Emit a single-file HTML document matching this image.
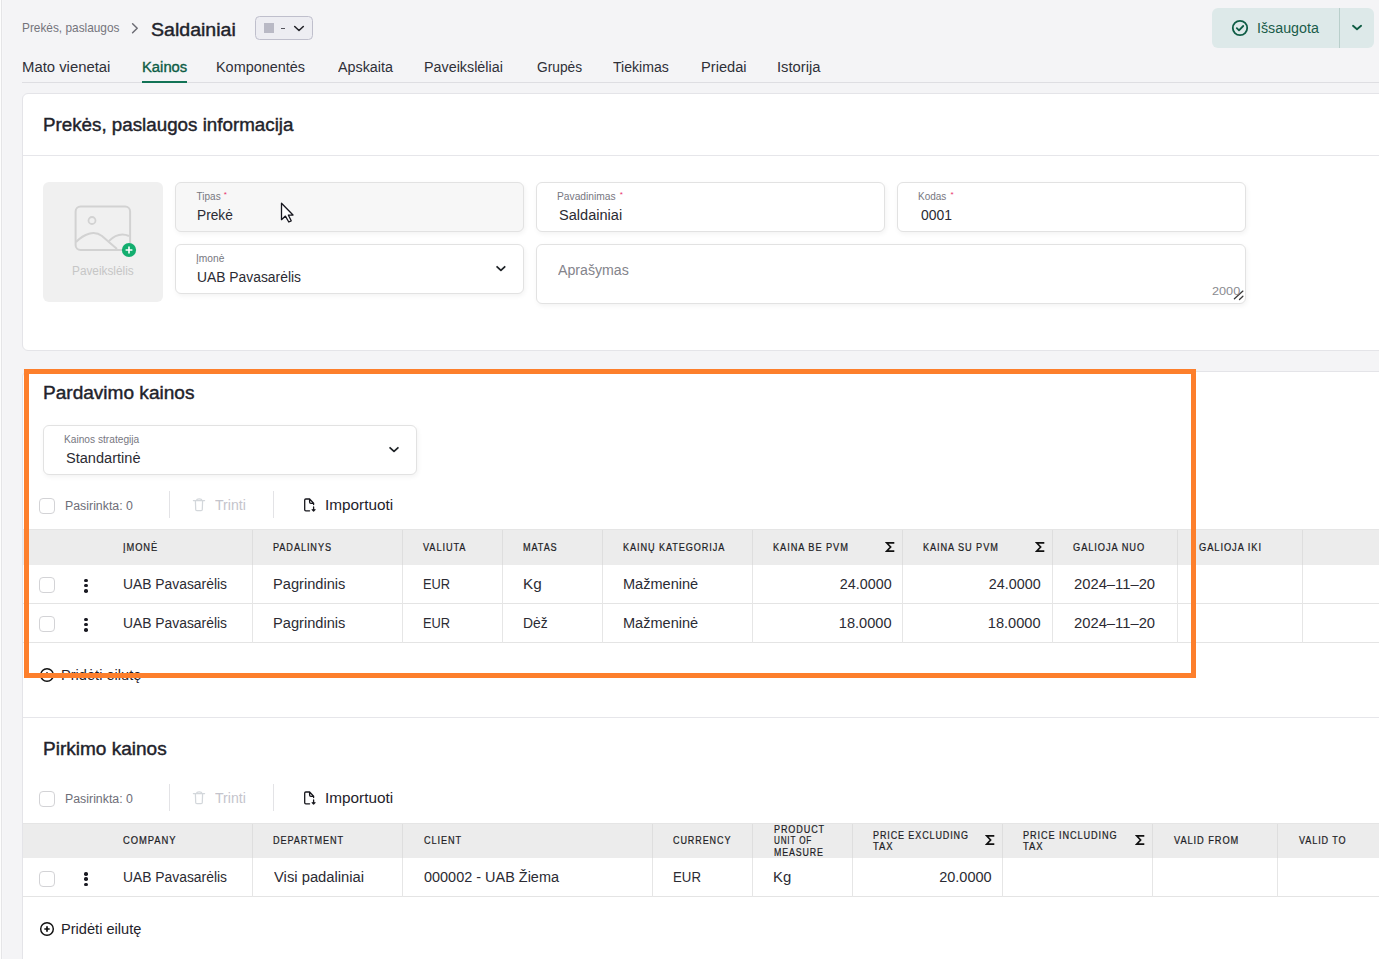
<!DOCTYPE html>
<html><head><meta charset="utf-8"><style>
html,body{margin:0;padding:0;}
body{width:1379px;height:959px;overflow:hidden;position:relative;background:#f4f4f6;font-family:"Liberation Sans",sans-serif;}
</style></head><body>
<!-- left border -->
<div style="position:absolute;left:0;top:0;width:1px;height:959px;background:#fdfdfd"></div><div style="position:absolute;left:1px;top:0;width:1px;height:959px;background:#e5e5e7"></div><div style="position:absolute;left:2px;top:0;width:1px;height:959px;background:#f6f6f8"></div>
<!-- breadcrumb chevron -->
<svg style="position:absolute;left:130px;top:21.5px" width="12" height="14" viewBox="0 0 12 14"><polyline points="2.6,1.8 7.2,6.3 2.6,10.8" fill="none" stroke="#6c6c74" stroke-width="1.5" stroke-linecap="round" stroke-linejoin="round"/></svg>
<!-- status dropdown -->
<div style="position:absolute;left:254.8px;top:16px;width:58px;height:24px;box-sizing:border-box;border:1.2px solid #bfbfcc;border-radius:4.5px;background:#ededf2"></div>
<div style="position:absolute;left:264px;top:23px;width:10px;height:10px;background:#b9b9c5"></div>
<div style="position:absolute;left:280.5px;top:28px;width:4.6px;height:1px;background:#55555e"></div>
<svg style="position:absolute;left:292px;top:23px" width="14" height="10" viewBox="0 0 14 10"><polyline points="2.7,3.5 7,7.5 11.3,3.5" fill="none" stroke="#24242a" stroke-width="1.6" stroke-linecap="round" stroke-linejoin="round"/></svg>
<!-- save button -->
<div style="position:absolute;left:1212px;top:8px;width:162px;height:40px;border-radius:6px;background:#dde9e9"></div>
<div style="position:absolute;left:1339px;top:8px;width:1px;height:40px;background:#b9cfcb"></div>
<svg style="position:absolute;left:1230px;top:18px" width="20" height="20" viewBox="0 0 20 20"><circle cx="10" cy="10" r="7.2" fill="none" stroke="#0f5d45" stroke-width="1.8"/><polyline points="6.8,10.2 9,12.3 13.2,8" fill="none" stroke="#0f5d45" stroke-width="1.8" stroke-linecap="round" stroke-linejoin="round"/></svg>
<svg style="position:absolute;left:1349px;top:21px" width="15" height="12" viewBox="0 0 15 12"><polyline points="4,4.8 8,8.2 12.1,4.8" fill="none" stroke="#0e5c43" stroke-width="1.85" stroke-linecap="round" stroke-linejoin="round"/></svg>
<!-- tabs line + underline -->
<div style="position:absolute;left:22px;top:82px;width:1357px;height:1px;background:#dedee2"></div>
<div style="position:absolute;left:142px;top:81px;width:45px;height:2px;background:#127356"></div>
<!-- card1 -->
<div style="position:absolute;left:22px;top:93px;width:1380px;height:258px;box-sizing:border-box;border:1px solid #e4e4e8;border-radius:6px;background:#fff"></div>
<div style="position:absolute;left:23px;top:155px;width:1356px;height:1px;background:#e6e6ea"></div>
<!-- image placeholder -->
<div style="position:absolute;left:43px;top:182px;width:120px;height:120px;border-radius:6px;background:#f0f0f0"></div>
<svg style="position:absolute;left:70px;top:200px" width="70" height="60" viewBox="0 0 70 60">
 <rect x="5.6" y="6.5" width="54.5" height="43.5" rx="5" fill="none" stroke="#d2d2d2" stroke-width="2"/>
 <circle cx="22" cy="20.5" r="3.5" fill="none" stroke="#d2d2d2" stroke-width="1.8"/>
 <path d="M6,42 C14,34 24,30 32,36 L47,49" fill="none" stroke="#d2d2d2" stroke-width="2"/>
 <path d="M39,41 C45,35 52,33 59,36" fill="none" stroke="#d2d2d2" stroke-width="2"/>
 <circle cx="59" cy="50" r="7.1" fill="#13ae6f"/>
 <path d="M59,46.6 V53.4 M55.6,50 H62.4" stroke="#fff" stroke-width="1.6" stroke-linecap="butt"/>
</svg>
<!-- fields -->
<div style="position:absolute;left:175px;top:182px;width:349px;height:50px;box-sizing:border-box;border:1px solid #e2e2e2;border-radius:6px;background:#f7f7f7;box-shadow:1px 2px 5px rgba(0,0,0,0.05)"></div>
<div style="position:absolute;left:536px;top:182px;width:349px;height:50px;box-sizing:border-box;border:1px solid #e2e2e2;border-radius:6px;background:#fff;box-shadow:1px 2px 5px rgba(0,0,0,0.05)"></div>
<div style="position:absolute;left:897px;top:182px;width:349px;height:50px;box-sizing:border-box;border:1px solid #e2e2e2;border-radius:6px;background:#fff;box-shadow:1px 2px 5px rgba(0,0,0,0.05)"></div>
<div style="position:absolute;left:175px;top:244px;width:349px;height:50px;box-sizing:border-box;border:1px solid #e2e2e2;border-radius:6px;background:#fff;box-shadow:1px 2px 5px rgba(0,0,0,0.05)"></div>
<svg style="position:absolute;left:493px;top:262px" width="14" height="12" viewBox="0 0 14 12"><polyline points="4.1,4.8 7.9,8.4 11.7,4.8" fill="none" stroke="#1e2226" stroke-width="1.75" stroke-linecap="round" stroke-linejoin="round"/></svg>
<div style="position:absolute;left:536px;top:244px;width:710px;height:60px;box-sizing:border-box;border:1px solid #e2e2e2;border-radius:6px;background:#fff;box-shadow:1px 2px 5px rgba(0,0,0,0.05)"></div>
<svg style="position:absolute;left:1232px;top:289px" width="12" height="12" viewBox="0 0 12 12"><path d="M2.4,9.8 L10.9,2.1 M7.5,10.5 L10.9,7.3" stroke="#3a3a3a" stroke-width="1.3" stroke-linecap="round"/></svg>
<!-- cursor -->
<svg style="position:absolute;left:279px;top:201.4px" width="18" height="24" viewBox="0 0 18 24"><path d="M2.5,2.2 L2.5,18.7 L6.4,15.1 L9.8,21 L12.2,19.8 L9.4,14.2 L14,14 Z" fill="#fff" stroke="#16161e" stroke-width="1.3" stroke-linejoin="round"/></svg>
<!-- card2+3 -->
<div style="position:absolute;left:22px;top:371px;width:1380px;height:600px;box-sizing:border-box;border:1px solid #e4e4e8;border-radius:6px;background:#fff"></div>
<!-- dropdown strategy -->
<div style="position:absolute;left:43px;top:425px;width:374px;height:50px;box-sizing:border-box;border:1px solid #e2e2e2;border-radius:6px;background:#fff;box-shadow:1px 2px 5px rgba(0,0,0,0.05)"></div>
<svg style="position:absolute;left:387px;top:443px" width="14" height="12" viewBox="0 0 14 12"><polyline points="3.1,4.8 7,8.3 10.9,4.8" fill="none" stroke="#1e2226" stroke-width="1.75" stroke-linecap="round" stroke-linejoin="round"/></svg>
<div style="position:absolute;left:39px;top:498.3px;width:16px;height:16px;box-sizing:border-box;border:1.3px solid #d3d3d6;border-radius:4px;background:#fff"></div><div style="position:absolute;left:169px;top:491px;width:1px;height:27px;background:#e3e3e6"></div><div style="position:absolute;left:273px;top:491px;width:1px;height:27px;background:#e3e3e6"></div><svg style="position:absolute;left:191px;top:496px" width="16" height="17" viewBox="0 0 16 17"><path d="M2.4,4.6 H13.6 M5.4,4.4 C5.8,2.4 10.6,2.4 11,4.4 M4.4,4.8 L4.7,13.4 C4.7,14.1 5.2,14.6 5.9,14.6 H10.1 C10.8,14.6 11.3,14.1 11.3,13.4 L11.6,4.8" fill="none" stroke="#d3d7db" stroke-width="1.25" stroke-linejoin="round" stroke-linecap="round"/></svg><svg style="position:absolute;left:301px;top:496px" width="18" height="18" viewBox="0 0 18 18"><path d="M8.6,14.8 H4.8 C4.1,14.8 3.7,14.4 3.7,13.7 V4.1 C3.7,3.4 4.1,3 4.8,3 H8.6 L12.6,7.2 V8.6 M8.6,3.2 V6 C8.6,6.8 9.1,7.3 9.9,7.3 H12.4" fill="none" stroke="#16161c" stroke-width="1.3" stroke-linejoin="round" stroke-linecap="round"/><path d="M12.6,10.9 V15 M11.2,13.6 L12.6,15 L14,13.6" fill="none" stroke="#16161c" stroke-width="1.3" stroke-linejoin="round" stroke-linecap="round"/></svg><div style="position:absolute;left:23px;top:529px;width:1356px;height:35.5px;background:#ececec;border-top:1px solid #e5e5e5;box-sizing:border-box"></div><div style="position:absolute;left:23px;top:602.5px;width:1356px;height:1px;background:#e4e4e4"></div><div style="position:absolute;left:39px;top:577.0px;width:16px;height:16px;box-sizing:border-box;border:1.3px solid #d3d3d6;border-radius:4px;background:#fff"></div><div style="position:absolute;left:84.25px;top:578.65px;width:3.5px;height:3.5px;border-radius:50%;background:#1a1a22"></div><div style="position:absolute;left:84.25px;top:583.9px;width:3.5px;height:3.5px;border-radius:50%;background:#1a1a22"></div><div style="position:absolute;left:84.25px;top:589.15px;width:3.5px;height:3.5px;border-radius:50%;background:#1a1a22"></div><div style="position:absolute;left:23px;top:641.5px;width:1356px;height:1px;background:#e4e4e4"></div><div style="position:absolute;left:39px;top:616.0px;width:16px;height:16px;box-sizing:border-box;border:1.3px solid #d3d3d6;border-radius:4px;background:#fff"></div><div style="position:absolute;left:84.25px;top:617.65px;width:3.5px;height:3.5px;border-radius:50%;background:#1a1a22"></div><div style="position:absolute;left:84.25px;top:622.9px;width:3.5px;height:3.5px;border-radius:50%;background:#1a1a22"></div><div style="position:absolute;left:84.25px;top:628.15px;width:3.5px;height:3.5px;border-radius:50%;background:#1a1a22"></div><div style="position:absolute;left:252px;top:530px;width:1px;height:34.5px;background:#dedede"></div><div style="position:absolute;left:252px;top:564.5px;width:1px;height:78px;background:#e6e6e6"></div><div style="position:absolute;left:402px;top:530px;width:1px;height:34.5px;background:#dedede"></div><div style="position:absolute;left:402px;top:564.5px;width:1px;height:78px;background:#e6e6e6"></div><div style="position:absolute;left:502px;top:530px;width:1px;height:34.5px;background:#dedede"></div><div style="position:absolute;left:502px;top:564.5px;width:1px;height:78px;background:#e6e6e6"></div><div style="position:absolute;left:602px;top:530px;width:1px;height:34.5px;background:#dedede"></div><div style="position:absolute;left:602px;top:564.5px;width:1px;height:78px;background:#e6e6e6"></div><div style="position:absolute;left:752px;top:530px;width:1px;height:34.5px;background:#dedede"></div><div style="position:absolute;left:752px;top:564.5px;width:1px;height:78px;background:#e6e6e6"></div><div style="position:absolute;left:902px;top:530px;width:1px;height:34.5px;background:#dedede"></div><div style="position:absolute;left:902px;top:564.5px;width:1px;height:78px;background:#e6e6e6"></div><div style="position:absolute;left:1052px;top:530px;width:1px;height:34.5px;background:#dedede"></div><div style="position:absolute;left:1052px;top:564.5px;width:1px;height:78px;background:#e6e6e6"></div><div style="position:absolute;left:1177px;top:530px;width:1px;height:34.5px;background:#dedede"></div><div style="position:absolute;left:1177px;top:564.5px;width:1px;height:78px;background:#e6e6e6"></div><div style="position:absolute;left:1302px;top:530px;width:1px;height:34.5px;background:#dedede"></div><div style="position:absolute;left:1302px;top:564.5px;width:1px;height:78px;background:#e6e6e6"></div><svg style="position:absolute;left:885px;top:541px" width="11" height="12" viewBox="0 0 11 12"><path d="M9.3,1.8 H1.6 L5.6,6 L1.6,10.2 H9.3" fill="none" stroke="#111" stroke-width="1.7" stroke-linejoin="miter" stroke-linecap="butt"/></svg><svg style="position:absolute;left:1035px;top:541px" width="11" height="12" viewBox="0 0 11 12"><path d="M9.3,1.8 H1.6 L5.6,6 L1.6,10.2 H9.3" fill="none" stroke="#111" stroke-width="1.7" stroke-linejoin="miter" stroke-linecap="butt"/></svg><svg style="position:absolute;left:39px;top:666.8px" width="16" height="16" viewBox="0 0 16 16"><circle cx="8" cy="8" r="6.3" fill="none" stroke="#111" stroke-width="1.45"/><path d="M8,5.3 V10.7 M5.3,8 H10.7" stroke="#111" stroke-width="1.7" stroke-linecap="butt"/></svg><div style="position:absolute;left:23px;top:717px;width:1356px;height:1px;background:#e6e6ea"></div><div style="position:absolute;left:39px;top:791.3px;width:16px;height:16px;box-sizing:border-box;border:1.3px solid #d3d3d6;border-radius:4px;background:#fff"></div><div style="position:absolute;left:169px;top:784px;width:1px;height:27px;background:#e3e3e6"></div><div style="position:absolute;left:273px;top:784px;width:1px;height:27px;background:#e3e3e6"></div><svg style="position:absolute;left:191px;top:789px" width="16" height="17" viewBox="0 0 16 17"><path d="M2.4,4.6 H13.6 M5.4,4.4 C5.8,2.4 10.6,2.4 11,4.4 M4.4,4.8 L4.7,13.4 C4.7,14.1 5.2,14.6 5.9,14.6 H10.1 C10.8,14.6 11.3,14.1 11.3,13.4 L11.6,4.8" fill="none" stroke="#d3d7db" stroke-width="1.25" stroke-linejoin="round" stroke-linecap="round"/></svg><svg style="position:absolute;left:301px;top:789px" width="18" height="18" viewBox="0 0 18 18"><path d="M8.6,14.8 H4.8 C4.1,14.8 3.7,14.4 3.7,13.7 V4.1 C3.7,3.4 4.1,3 4.8,3 H8.6 L12.6,7.2 V8.6 M8.6,3.2 V6 C8.6,6.8 9.1,7.3 9.9,7.3 H12.4" fill="none" stroke="#16161c" stroke-width="1.3" stroke-linejoin="round" stroke-linecap="round"/><path d="M12.6,10.9 V15 M11.2,13.6 L12.6,15 L14,13.6" fill="none" stroke="#16161c" stroke-width="1.3" stroke-linejoin="round" stroke-linecap="round"/></svg><div style="position:absolute;left:23px;top:822.5px;width:1356px;height:35.5px;background:#ececec;border-top:1px solid #e5e5e5;box-sizing:border-box"></div><div style="position:absolute;left:23px;top:896.0px;width:1356px;height:1px;background:#e4e4e4"></div><div style="position:absolute;left:39px;top:870.5px;width:16px;height:16px;box-sizing:border-box;border:1.3px solid #d3d3d6;border-radius:4px;background:#fff"></div><div style="position:absolute;left:84.25px;top:872.15px;width:3.5px;height:3.5px;border-radius:50%;background:#1a1a22"></div><div style="position:absolute;left:84.25px;top:877.4px;width:3.5px;height:3.5px;border-radius:50%;background:#1a1a22"></div><div style="position:absolute;left:84.25px;top:882.65px;width:3.5px;height:3.5px;border-radius:50%;background:#1a1a22"></div><div style="position:absolute;left:252px;top:823.5px;width:1px;height:34.5px;background:#dedede"></div><div style="position:absolute;left:252px;top:858.0px;width:1px;height:39px;background:#e6e6e6"></div><div style="position:absolute;left:402px;top:823.5px;width:1px;height:34.5px;background:#dedede"></div><div style="position:absolute;left:402px;top:858.0px;width:1px;height:39px;background:#e6e6e6"></div><div style="position:absolute;left:652px;top:823.5px;width:1px;height:34.5px;background:#dedede"></div><div style="position:absolute;left:652px;top:858.0px;width:1px;height:39px;background:#e6e6e6"></div><div style="position:absolute;left:752px;top:823.5px;width:1px;height:34.5px;background:#dedede"></div><div style="position:absolute;left:752px;top:858.0px;width:1px;height:39px;background:#e6e6e6"></div><div style="position:absolute;left:852px;top:823.5px;width:1px;height:34.5px;background:#dedede"></div><div style="position:absolute;left:852px;top:858.0px;width:1px;height:39px;background:#e6e6e6"></div><div style="position:absolute;left:1002px;top:823.5px;width:1px;height:34.5px;background:#dedede"></div><div style="position:absolute;left:1002px;top:858.0px;width:1px;height:39px;background:#e6e6e6"></div><div style="position:absolute;left:1152px;top:823.5px;width:1px;height:34.5px;background:#dedede"></div><div style="position:absolute;left:1152px;top:858.0px;width:1px;height:39px;background:#e6e6e6"></div><div style="position:absolute;left:1277px;top:823.5px;width:1px;height:34.5px;background:#dedede"></div><div style="position:absolute;left:1277px;top:858.0px;width:1px;height:39px;background:#e6e6e6"></div><svg style="position:absolute;left:985px;top:834px" width="11" height="12" viewBox="0 0 11 12"><path d="M9.3,1.8 H1.6 L5.6,6 L1.6,10.2 H9.3" fill="none" stroke="#111" stroke-width="1.7" stroke-linejoin="miter" stroke-linecap="butt"/></svg><svg style="position:absolute;left:1135px;top:834px" width="11" height="12" viewBox="0 0 11 12"><path d="M9.3,1.8 H1.6 L5.6,6 L1.6,10.2 H9.3" fill="none" stroke="#111" stroke-width="1.7" stroke-linejoin="miter" stroke-linecap="butt"/></svg><svg style="position:absolute;left:39px;top:920.8px" width="16" height="16" viewBox="0 0 16 16"><circle cx="8" cy="8" r="6.3" fill="none" stroke="#111" stroke-width="1.45"/><path d="M8,5.3 V10.7 M5.3,8 H10.7" stroke="#111" stroke-width="1.7" stroke-linecap="butt"/></svg><span id="t0" style="position:absolute;top:20.90px;font-size:13px;line-height:13px;color:#74747c;font-weight:400;white-space:nowrap;left:22.09px;transform-origin:left center;transform:scaleX(0.9112);">Prekės, paslaugos</span><span id="t1" style="position:absolute;top:20.66px;font-size:18px;line-height:18px;color:#1f232b;font-weight:400;white-space:nowrap;left:150.50px;transform-origin:left center;transform:scaleX(1.0862);-webkit-text-stroke:0.42px #1f232b;">Saldainiai</span><span id="t2" style="position:absolute;top:21.25px;font-size:14px;line-height:14px;color:#1a5c4a;font-weight:400;white-space:nowrap;left:1257.38px;transform-origin:left center;transform:scaleX(1.0180);">Išsaugota</span><span id="t3" style="position:absolute;top:59.65px;font-size:14px;line-height:14px;color:#2f3038;font-weight:400;white-space:nowrap;left:22.14px;transform-origin:left center;transform:scaleX(1.0614);">Mato vienetai</span><span id="t4" style="position:absolute;top:59.65px;font-size:14px;line-height:14px;color:#0d5c45;font-weight:400;white-space:nowrap;left:141.54px;transform-origin:left center;transform:scaleX(1.0572);-webkit-text-stroke:0.35px #0d5c45;">Kainos</span><span id="t5" style="position:absolute;top:59.65px;font-size:14px;line-height:14px;color:#2f3038;font-weight:400;white-space:nowrap;left:216.27px;transform-origin:left center;transform:scaleX(1.0294);">Komponentės</span><span id="t6" style="position:absolute;top:59.65px;font-size:14px;line-height:14px;color:#2f3038;font-weight:400;white-space:nowrap;left:337.80px;transform-origin:left center;transform:scaleX(1.0221);">Apskaita</span><span id="t7" style="position:absolute;top:59.65px;font-size:14px;line-height:14px;color:#2f3038;font-weight:400;white-space:nowrap;left:423.98px;transform-origin:left center;transform:scaleX(1.0234);">Paveikslėliai</span><span id="t8" style="position:absolute;top:59.65px;font-size:14px;line-height:14px;color:#2f3038;font-weight:400;white-space:nowrap;left:536.70px;transform-origin:left center;transform:scaleX(0.9824);">Grupės</span><span id="t9" style="position:absolute;top:59.65px;font-size:14px;line-height:14px;color:#2f3038;font-weight:400;white-space:nowrap;left:613.40px;transform-origin:left center;transform:scaleX(1.0056);">Tiekimas</span><span id="t10" style="position:absolute;top:59.65px;font-size:14px;line-height:14px;color:#2f3038;font-weight:400;white-space:nowrap;left:700.75px;transform-origin:left center;transform:scaleX(1.0455);">Priedai</span><span id="t11" style="position:absolute;top:59.65px;font-size:14px;line-height:14px;color:#2f3038;font-weight:400;white-space:nowrap;left:776.84px;transform-origin:left center;transform:scaleX(1.0557);">Istorija</span><span id="t12" style="position:absolute;top:116.06px;font-size:18px;line-height:18px;color:#1f232b;font-weight:400;white-space:nowrap;left:42.66px;transform-origin:left center;transform:scaleX(1.0429);-webkit-text-stroke:0.42px #1f232b;">Prekės, paslaugos informacija</span><span id="t13" style="position:absolute;top:264.84px;font-size:12px;line-height:12px;color:#c6c6c6;font-weight:400;white-space:nowrap;left:72.30px;transform-origin:left center;transform:scaleX(0.9842);">Paveikslėlis</span><span id="t14" style="position:absolute;top:191.53px;font-size:10px;line-height:10px;color:#77777f;font-weight:400;white-space:nowrap;left:196.60px;transform-origin:left center;">Tipas</span><span id="t15" style="position:absolute;top:191.43px;font-size:8px;line-height:8px;color:#e8336b;font-weight:400;white-space:nowrap;left:223.80px;transform-origin:left center;">*</span><span id="t16" style="position:absolute;top:208.35px;font-size:14px;line-height:14px;color:#2b2b33;font-weight:400;white-space:nowrap;left:197.32px;transform-origin:left center;transform:scaleX(0.9780);">Prekė</span><span id="t17" style="position:absolute;top:191.63px;font-size:10px;line-height:10px;color:#77777f;font-weight:400;white-space:nowrap;left:557.30px;transform-origin:left center;transform:scaleX(1.0253);">Pavadinimas</span><span id="t18" style="position:absolute;top:191.43px;font-size:8px;line-height:8px;color:#e8336b;font-weight:400;white-space:nowrap;left:619.80px;transform-origin:left center;">*</span><span id="t19" style="position:absolute;top:208.15px;font-size:14px;line-height:14px;color:#2b2b33;font-weight:400;white-space:nowrap;left:558.50px;transform-origin:left center;transform:scaleX(1.0396);">Saldainiai</span><span id="t20" style="position:absolute;top:191.63px;font-size:10px;line-height:10px;color:#77777f;font-weight:400;white-space:nowrap;left:918.40px;transform-origin:left center;transform:scaleX(0.9981);">Kodas</span><span id="t21" style="position:absolute;top:191.43px;font-size:8px;line-height:8px;color:#e8336b;font-weight:400;white-space:nowrap;left:950.40px;transform-origin:left center;">*</span><span id="t22" style="position:absolute;top:208.15px;font-size:14px;line-height:14px;color:#2b2b33;font-weight:400;white-space:nowrap;left:920.60px;transform-origin:left center;transform:scaleX(0.9949);">0001</span><span id="t23" style="position:absolute;top:253.53px;font-size:10px;line-height:10px;color:#77777f;font-weight:400;white-space:nowrap;left:195.60px;transform-origin:left center;transform:scaleX(1.0237);">Įmonė</span><span id="t24" style="position:absolute;top:270.15px;font-size:14px;line-height:14px;color:#2b2b33;font-weight:400;white-space:nowrap;left:197.31px;transform-origin:left center;transform:scaleX(0.9900);">UAB Pavasarėlis</span><span id="t25" style="position:absolute;top:263.15px;font-size:14px;line-height:14px;color:#84848b;font-weight:400;white-space:nowrap;left:557.60px;transform-origin:left center;transform:scaleX(1.0111);">Aprašymas</span><span id="t26" style="position:absolute;top:285.59px;font-size:11px;line-height:11px;color:#8a8a90;font-weight:400;white-space:nowrap;left:1211.90px;transform-origin:left center;transform:scaleX(1.1539);">2000</span><span id="t27" style="position:absolute;top:383.96px;font-size:18px;line-height:18px;color:#1f232b;font-weight:400;white-space:nowrap;left:42.94px;transform-origin:left center;transform:scaleX(1.0586);-webkit-text-stroke:0.42px #1f232b;">Pardavimo kainos</span><span id="t28" style="position:absolute;top:434.54px;font-size:10px;line-height:10px;color:#77777f;font-weight:400;white-space:nowrap;left:64.30px;transform-origin:left center;transform:scaleX(1.0179);">Kainos strategija</span><span id="t29" style="position:absolute;top:451.15px;font-size:14px;line-height:14px;color:#2b2b33;font-weight:400;white-space:nowrap;left:65.70px;transform-origin:left center;transform:scaleX(1.0401);">Standartinė</span><span id="t30" style="position:absolute;top:499.62px;font-size:12.5px;line-height:12.5px;color:#6e6e78;font-weight:400;white-space:nowrap;left:64.51px;transform-origin:left center;transform:scaleX(0.9878);">Pasirinkta: 0</span><span id="t31" style="position:absolute;top:498.35px;font-size:14px;line-height:14px;color:#c4c4cc;font-weight:400;white-space:nowrap;left:214.50px;transform-origin:left center;transform:scaleX(1.0072);">Trinti</span><span id="t32" style="position:absolute;top:498.15px;font-size:14px;line-height:14px;color:#1f232b;font-weight:400;white-space:nowrap;left:324.51px;transform-origin:left center;transform:scaleX(1.0943);">Importuoti</span><span id="t33" style="position:absolute;top:542.83px;font-size:10px;line-height:10px;color:#1e1e26;font-weight:400;white-space:nowrap;left:123.40px;transform-origin:left center;transform:scaleX(0.9297);-webkit-text-stroke:0.22px #1e1e26;letter-spacing:1.0px;">ĮMONĖ</span><span id="t34" style="position:absolute;top:542.83px;font-size:10px;line-height:10px;color:#1e1e26;font-weight:400;white-space:nowrap;left:272.90px;transform-origin:left center;transform:scaleX(0.9149);-webkit-text-stroke:0.22px #1e1e26;letter-spacing:1.0px;">PADALINYS</span><span id="t35" style="position:absolute;top:542.83px;font-size:10px;line-height:10px;color:#1e1e26;font-weight:400;white-space:nowrap;left:423.30px;transform-origin:left center;transform:scaleX(0.9178);-webkit-text-stroke:0.22px #1e1e26;letter-spacing:1.0px;">VALIUTA</span><span id="t36" style="position:absolute;top:542.83px;font-size:10px;line-height:10px;color:#1e1e26;font-weight:400;white-space:nowrap;left:523.40px;transform-origin:left center;transform:scaleX(0.9117);-webkit-text-stroke:0.22px #1e1e26;letter-spacing:1.0px;">MATAS</span><span id="t37" style="position:absolute;top:542.83px;font-size:10px;line-height:10px;color:#1e1e26;font-weight:400;white-space:nowrap;left:622.80px;transform-origin:left center;transform:scaleX(0.9140);-webkit-text-stroke:0.22px #1e1e26;letter-spacing:1.0px;">KAINŲ KATEGORIJA</span><span id="t38" style="position:absolute;top:542.83px;font-size:10px;line-height:10px;color:#1e1e26;font-weight:400;white-space:nowrap;left:772.90px;transform-origin:left center;transform:scaleX(0.9244);-webkit-text-stroke:0.22px #1e1e26;letter-spacing:1.0px;">KAINA BE PVM</span><span id="t39" style="position:absolute;top:542.83px;font-size:10px;line-height:10px;color:#1e1e26;font-weight:400;white-space:nowrap;left:923.30px;transform-origin:left center;transform:scaleX(0.9169);-webkit-text-stroke:0.22px #1e1e26;letter-spacing:1.0px;">KAINA SU PVM</span><span id="t40" style="position:absolute;top:542.83px;font-size:10px;line-height:10px;color:#1e1e26;font-weight:400;white-space:nowrap;left:1073.40px;transform-origin:left center;transform:scaleX(0.9282);-webkit-text-stroke:0.22px #1e1e26;letter-spacing:1.0px;">GALIOJA NUO</span><span id="t41" style="position:absolute;top:542.83px;font-size:10px;line-height:10px;color:#1e1e26;font-weight:400;white-space:nowrap;left:1198.50px;transform-origin:left center;transform:scaleX(0.9298);-webkit-text-stroke:0.22px #1e1e26;letter-spacing:1.0px;">GALIOJA IKI</span><span id="t42" style="position:absolute;top:576.65px;font-size:14px;line-height:14px;color:#2b2b33;font-weight:400;white-space:nowrap;left:123.31px;transform-origin:left center;transform:scaleX(0.9900);">UAB Pavasarėlis</span><span id="t43" style="position:absolute;top:576.65px;font-size:14px;line-height:14px;color:#2b2b33;font-weight:400;white-space:nowrap;left:272.76px;transform-origin:left center;transform:scaleX(1.0445);">Pagrindinis</span><span id="t44" style="position:absolute;top:576.65px;font-size:14px;line-height:14px;color:#2b2b33;font-weight:400;white-space:nowrap;left:423.28px;transform-origin:left center;transform:scaleX(0.9175);">EUR</span><span id="t45" style="position:absolute;top:576.65px;font-size:14px;line-height:14px;color:#2b2b33;font-weight:400;white-space:nowrap;left:523.21px;transform-origin:left center;transform:scaleX(1.0888);">Kg</span><span id="t46" style="position:absolute;top:576.65px;font-size:14px;line-height:14px;color:#2b2b33;font-weight:400;white-space:nowrap;left:622.66px;transform-origin:left center;transform:scaleX(1.0394);">Mažmeninė</span><span id="t47" style="position:absolute;top:576.65px;font-size:14px;line-height:14px;color:#2b2b33;font-weight:400;white-space:nowrap;right:487.22px;transform-origin:right center;transform:scaleX(1.0232);">24.0000</span><span id="t48" style="position:absolute;top:576.65px;font-size:14px;line-height:14px;color:#2b2b33;font-weight:400;white-space:nowrap;right:337.92px;transform-origin:right center;transform:scaleX(1.0232);">24.0000</span><span id="t49" style="position:absolute;top:576.65px;font-size:14px;line-height:14px;color:#2b2b33;font-weight:400;white-space:nowrap;left:1074.20px;transform-origin:left center;transform:scaleX(1.0553);">2024–11–20</span><span id="t50" style="position:absolute;top:615.65px;font-size:14px;line-height:14px;color:#2b2b33;font-weight:400;white-space:nowrap;left:123.31px;transform-origin:left center;transform:scaleX(0.9900);">UAB Pavasarėlis</span><span id="t51" style="position:absolute;top:615.65px;font-size:14px;line-height:14px;color:#2b2b33;font-weight:400;white-space:nowrap;left:272.76px;transform-origin:left center;transform:scaleX(1.0445);">Pagrindinis</span><span id="t52" style="position:absolute;top:615.65px;font-size:14px;line-height:14px;color:#2b2b33;font-weight:400;white-space:nowrap;left:423.28px;transform-origin:left center;transform:scaleX(0.9175);">EUR</span><span id="t53" style="position:absolute;top:615.65px;font-size:14px;line-height:14px;color:#2b2b33;font-weight:400;white-space:nowrap;left:523.31px;transform-origin:left center;transform:scaleX(0.9918);">Dėž</span><span id="t54" style="position:absolute;top:615.65px;font-size:14px;line-height:14px;color:#2b2b33;font-weight:400;white-space:nowrap;left:622.66px;transform-origin:left center;transform:scaleX(1.0394);">Mažmeninė</span><span id="t55" style="position:absolute;top:615.65px;font-size:14px;line-height:14px;color:#2b2b33;font-weight:400;white-space:nowrap;right:487.22px;transform-origin:right center;transform:scaleX(1.0438);">18.0000</span><span id="t56" style="position:absolute;top:615.65px;font-size:14px;line-height:14px;color:#2b2b33;font-weight:400;white-space:nowrap;right:337.92px;transform-origin:right center;transform:scaleX(1.0438);">18.0000</span><span id="t57" style="position:absolute;top:615.65px;font-size:14px;line-height:14px;color:#2b2b33;font-weight:400;white-space:nowrap;left:1074.20px;transform-origin:left center;transform:scaleX(1.0553);">2024–11–20</span><span id="t58" style="position:absolute;top:668.25px;font-size:14px;line-height:14px;color:#1f232b;font-weight:400;white-space:nowrap;left:61.36px;transform-origin:left center;transform:scaleX(1.0439);">Pridėti eilutę</span><span id="t59" style="position:absolute;top:740.46px;font-size:18px;line-height:18px;color:#1f232b;font-weight:400;white-space:nowrap;left:42.74px;transform-origin:left center;transform:scaleX(1.0566);-webkit-text-stroke:0.42px #1f232b;">Pirkimo kainos</span><span id="t60" style="position:absolute;top:792.62px;font-size:12.5px;line-height:12.5px;color:#6e6e78;font-weight:400;white-space:nowrap;left:64.51px;transform-origin:left center;transform:scaleX(0.9878);">Pasirinkta: 0</span><span id="t61" style="position:absolute;top:791.35px;font-size:14px;line-height:14px;color:#c4c4cc;font-weight:400;white-space:nowrap;left:214.50px;transform-origin:left center;transform:scaleX(1.0072);">Trinti</span><span id="t62" style="position:absolute;top:791.15px;font-size:14px;line-height:14px;color:#1f232b;font-weight:400;white-space:nowrap;left:324.51px;transform-origin:left center;transform:scaleX(1.0943);">Importuoti</span><span id="t63" style="position:absolute;top:835.63px;font-size:10px;line-height:10px;color:#1e1e26;font-weight:400;white-space:nowrap;left:123.20px;transform-origin:left center;transform:scaleX(0.9403);-webkit-text-stroke:0.22px #1e1e26;letter-spacing:1.0px;">COMPANY</span><span id="t64" style="position:absolute;top:835.63px;font-size:10px;line-height:10px;color:#1e1e26;font-weight:400;white-space:nowrap;left:272.90px;transform-origin:left center;transform:scaleX(0.9107);-webkit-text-stroke:0.22px #1e1e26;letter-spacing:1.0px;">DEPARTMENT</span><span id="t65" style="position:absolute;top:835.63px;font-size:10px;line-height:10px;color:#1e1e26;font-weight:400;white-space:nowrap;left:423.60px;transform-origin:left center;transform:scaleX(0.9122);-webkit-text-stroke:0.22px #1e1e26;letter-spacing:1.0px;">CLIENT</span><span id="t66" style="position:absolute;top:835.63px;font-size:10px;line-height:10px;color:#1e1e26;font-weight:400;white-space:nowrap;left:673.00px;transform-origin:left center;transform:scaleX(0.9016);-webkit-text-stroke:0.22px #1e1e26;letter-spacing:1.0px;">CURRENCY</span><span id="t67" style="position:absolute;top:824.74px;font-size:10px;line-height:10px;color:#1e1e26;font-weight:400;white-space:nowrap;left:773.50px;transform-origin:left center;transform:scaleX(0.9036);-webkit-text-stroke:0.22px #1e1e26;letter-spacing:1.0px;">PRODUCT</span><span id="t68" style="position:absolute;top:835.74px;font-size:10px;line-height:10px;color:#1e1e26;font-weight:400;white-space:nowrap;left:773.50px;transform-origin:left center;transform:scaleX(0.8129);-webkit-text-stroke:0.22px #1e1e26;letter-spacing:1.0px;">UNIT OF</span><span id="t69" style="position:absolute;top:847.63px;font-size:10px;line-height:10px;color:#1e1e26;font-weight:400;white-space:nowrap;left:773.50px;transform-origin:left center;transform:scaleX(0.8838);-webkit-text-stroke:0.22px #1e1e26;letter-spacing:1.0px;">MEASURE</span><span id="t70" style="position:absolute;top:830.74px;font-size:10px;line-height:10px;color:#1e1e26;font-weight:400;white-space:nowrap;left:873.20px;transform-origin:left center;transform:scaleX(0.8989);-webkit-text-stroke:0.22px #1e1e26;letter-spacing:1.0px;">PRICE EXCLUDING</span><span id="t71" style="position:absolute;top:841.63px;font-size:10px;line-height:10px;color:#1e1e26;font-weight:400;white-space:nowrap;left:873.20px;transform-origin:left center;transform:scaleX(0.9460);-webkit-text-stroke:0.22px #1e1e26;letter-spacing:1.0px;">TAX</span><span id="t72" style="position:absolute;top:830.74px;font-size:10px;line-height:10px;color:#1e1e26;font-weight:400;white-space:nowrap;left:1023.00px;transform-origin:left center;transform:scaleX(0.9136);-webkit-text-stroke:0.22px #1e1e26;letter-spacing:1.0px;">PRICE INCLUDING</span><span id="t73" style="position:absolute;top:841.63px;font-size:10px;line-height:10px;color:#1e1e26;font-weight:400;white-space:nowrap;left:1023.00px;transform-origin:left center;transform:scaleX(0.9460);-webkit-text-stroke:0.22px #1e1e26;letter-spacing:1.0px;">TAX</span><span id="t74" style="position:absolute;top:835.63px;font-size:10px;line-height:10px;color:#1e1e26;font-weight:400;white-space:nowrap;left:1173.50px;transform-origin:left center;transform:scaleX(0.9269);-webkit-text-stroke:0.22px #1e1e26;letter-spacing:1.0px;">VALID FROM</span><span id="t75" style="position:absolute;top:835.63px;font-size:10px;line-height:10px;color:#1e1e26;font-weight:400;white-space:nowrap;left:1298.50px;transform-origin:left center;transform:scaleX(0.9062);-webkit-text-stroke:0.22px #1e1e26;letter-spacing:1.0px;">VALID TO</span><span id="t76" style="position:absolute;top:870.35px;font-size:14px;line-height:14px;color:#2b2b33;font-weight:400;white-space:nowrap;left:123.31px;transform-origin:left center;transform:scaleX(0.9900);">UAB Pavasarėlis</span><span id="t77" style="position:absolute;top:870.35px;font-size:14px;line-height:14px;color:#2b2b33;font-weight:400;white-space:nowrap;left:273.80px;transform-origin:left center;transform:scaleX(1.0558);">Visi padaliniai</span><span id="t78" style="position:absolute;top:870.35px;font-size:14px;line-height:14px;color:#2b2b33;font-weight:400;white-space:nowrap;left:424.40px;transform-origin:left center;transform:scaleX(1.0325);">000002 - UAB Žiema</span><span id="t79" style="position:absolute;top:870.35px;font-size:14px;line-height:14px;color:#2b2b33;font-weight:400;white-space:nowrap;left:672.95px;transform-origin:left center;transform:scaleX(0.9456);">EUR</span><span id="t80" style="position:absolute;top:870.35px;font-size:14px;line-height:14px;color:#2b2b33;font-weight:400;white-space:nowrap;left:773.34px;transform-origin:left center;transform:scaleX(1.0627);">Kg</span><span id="t81" style="position:absolute;top:870.35px;font-size:14px;line-height:14px;color:#2b2b33;font-weight:400;white-space:nowrap;right:387.52px;transform-origin:right center;transform:scaleX(1.0370);">20.0000</span><span id="t82" style="position:absolute;top:922.35px;font-size:14px;line-height:14px;color:#1f232b;font-weight:400;white-space:nowrap;left:61.36px;transform-origin:left center;transform:scaleX(1.0439);">Pridėti eilutę</span><div style="position:absolute;left:24px;top:369px;width:1172px;height:309px;box-sizing:border-box;border:5px solid #fd7f2c"></div>
</body></html>
